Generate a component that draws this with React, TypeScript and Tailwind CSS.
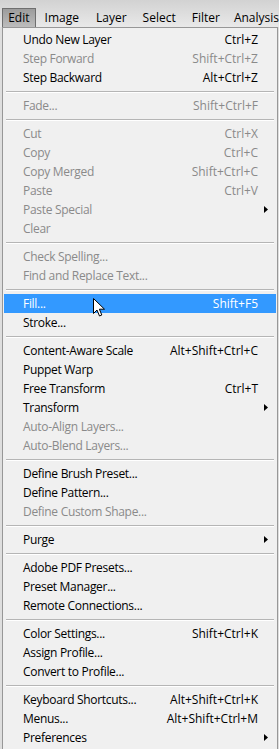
import { JSX } from 'react';

type Item =
	| { sep: true }
	| { label: string; key?: string; off?: boolean; sub?: boolean; hot?: boolean };

const items: Item[] = [
	{ label: 'Undo New Layer', key: 'Ctrl+Z' },
	{ label: 'Step Forward', key: 'Shift+Ctrl+Z', off: true },
	{ label: 'Step Backward', key: 'Alt+Ctrl+Z' },
	{ sep: true },
	{ label: 'Fade...', key: 'Shift+Ctrl+F', off: true },
	{ sep: true },
	{ label: 'Cut', key: 'Ctrl+X', off: true },
	{ label: 'Copy', key: 'Ctrl+C', off: true },
	{ label: 'Copy Merged', key: 'Shift+Ctrl+C', off: true },
	{ label: 'Paste', key: 'Ctrl+V', off: true },
	{ label: 'Paste Special', off: true, sub: true },
	{ label: 'Clear', off: true },
	{ sep: true },
	{ label: 'Check Spelling...', off: true },
	{ label: 'Find and Replace Text...', off: true },
	{ sep: true },
	{ label: 'Fill...', key: 'Shift+F5', hot: true },
	{ label: 'Stroke...' },
	{ sep: true },
	{ label: 'Content-Aware Scale', key: 'Alt+Shift+Ctrl+C' },
	{ label: 'Puppet Warp' },
	{ label: 'Free Transform', key: 'Ctrl+T' },
	{ label: 'Transform', sub: true },
	{ label: 'Auto-Align Layers...', off: true },
	{ label: 'Auto-Blend Layers...', off: true },
	{ sep: true },
	{ label: 'Define Brush Preset...' },
	{ label: 'Define Pattern...' },
	{ label: 'Define Custom Shape...', off: true },
	{ sep: true },
	{ label: 'Purge', sub: true },
	{ sep: true },
	{ label: 'Adobe PDF Presets...' },
	{ label: 'Preset Manager...' },
	{ label: 'Remote Connections...' },
	{ sep: true },
	{ label: 'Color Settings...', key: 'Shift+Ctrl+K' },
	{ label: 'Assign Profile...' },
	{ label: 'Convert to Profile...' },
	{ sep: true },
	{ label: 'Keyboard Shortcuts...', key: 'Alt+Shift+Ctrl+K' },
	{ label: 'Menus...', key: 'Alt+Shift+Ctrl+M' },
	{ label: 'Preferences', sub: true },
];

const Arrow = ({ white }: { white?: boolean }): JSX.Element => (
	<svg width="4" height="7" viewBox="0 0 4 7">
		<path d="M0 0 L4 3.5 L0 7 Z" fill={white ? '#fff' : '#000'} />
	</svg>
);

const Cursor = (): JSX.Element => (
	<svg width="13" height="20" viewBox="0 0 13 20" className="absolute left-[89px] top-[4px]">
		<path
			d="M0.5 0.5 L0.5 15.5 L4 12 L6.5 18 L8.8 17 L6.4 11.2 L11.5 11.2 Z"
			fill="#fff"
			stroke="#000"
			strokeWidth="1"
			strokeLinejoin="round"
		/>
	</svg>
);

const App = (): JSX.Element => {
	return (
		<div
			className="w-[279px] h-[749px] overflow-hidden bg-[#dedede] text-[12px] leading-none"
			style={{ fontFamily: '"Open Sans", "Noto Sans", sans-serif' }}
		>
			<div className="h-[27px] flex items-end bg-gradient-to-b from-[#d2d2d2] to-[#e9e9e9] pl-[2px]">
				<div className="h-[19px] w-[35px] flex items-center justify-center border border-b-0 border-[#6f6f6f] bg-gradient-to-b from-[#9c9c9c] to-[#bdbdbd] text-black">
					Edit
				</div>
				<div className="flex h-[19px] items-center text-black">
					<span className="ml-[9px]">Image</span>
					<span className="ml-[17px]">Layer</span>
					<span className="ml-[16px]">Select</span>
					<span className="ml-[16px]">Filter</span>
					<span className="ml-[14px]">Analysis</span>
				</div>
			</div>
			<div className="ml-[2px] w-[276px] bg-[#f0f0f0] border border-[#979797] pt-[2px] pb-[2px]">
				{items.map((it, i) =>
					'sep' in it ? (
						<div key={i} className="h-[9px] flex flex-col justify-center px-[3px]">
							<div className="h-px bg-[#b5b5b5]" />
							<div className="h-px bg-white" />
						</div>
					) : (
						<div
							key={i}
							className={`relative h-[19px] flex items-center pl-[19px] mx-[1px] ${
								it.hot ? 'bg-[#3399ff] text-white' : it.off ? 'text-[#8a8a8a]' : 'text-black'
							}`}
						>
							<span className="flex-1 tracking-[-0.3px]">{it.label}</span>
							{it.key && <span>{it.key}</span>}
							<span className="w-[18px] flex justify-end pr-[8px]">
								{it.sub && <Arrow white={it.hot} />}
							</span>
							{it.hot && <Cursor />}
						</div>
					),
				)}
			</div>
		</div>
	);
};

export default App;
